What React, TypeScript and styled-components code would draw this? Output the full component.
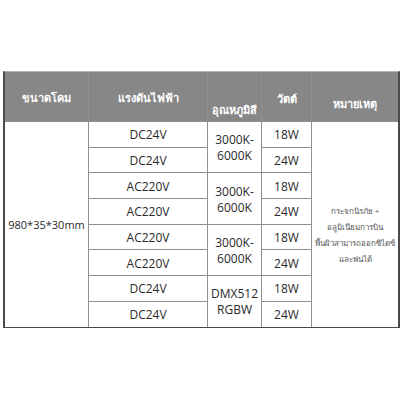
import React from 'react';
import styled, { createGlobalStyle } from 'styled-components';

const GlobalStyle = createGlobalStyle`
  html, body {
    margin: 0;
    padding: 0;
    background: #ffffff;
  }
  body {
    font-family: "Open Sans", "Noto Sans", "DejaVu Sans", sans-serif;
  }
`;

const Page = styled.div`
  width: 400px;
  height: 400px;
  padding: 71px 0 0 3px;
  box-sizing: border-box;
`;

const Table = styled.div`
  display: grid;
  grid-template-columns: 83px 118px 53px 49px 86px;
  grid-template-rows: 49px repeat(8, 24.7px);
  gap: 1px;
  width: fit-content;
  background: #8f8f8f;
  border-top: 1px solid #b5b5b5;
  border-left: 2px solid #4a4a4a;
  border-right: 2px solid #4a4a4a;
  border-bottom: 1px solid #4a4a4a;
`;

const HeadCell = styled.div<{ offset: number }>`
  background: #878787;
  color: #ffffff;
  font-size: 11px;
  font-weight: 700;
  display: flex;
  align-items: center;
  justify-content: center;
  padding-top: ${(p) => p.offset}px;
  box-sizing: border-box;
`;

const Cell = styled.div<{ span?: number; col: number; row: number; size?: number }>`
  grid-column: ${(p) => p.col};
  grid-row: ${(p) => p.row} / span ${(p) => p.span ?? 1};
  background: #ffffff;
  color: #2a2a2a;
  font-size: ${(p) => p.size ?? 12}px;
  line-height: 16px;
  display: flex;
  align-items: center;
  justify-content: center;
  text-align: center;
  padding-top: 2px;
  box-sizing: border-box;
`;

const Note = styled.div`
  font-size: 8px;
  line-height: 16px;
  color: #555555;
  white-space: nowrap;
  padding-top: 20px;
`;

const heads = [
  { text: 'ขนาดโคม', offset: 2 },
  { text: 'แรงดันไฟฟ้า', offset: 2 },
  { text: 'อุณหภูมิสี', offset: 26 },
  { text: 'วัตต์', offset: 4 },
  { text: 'หมายเหตุ', offset: 14 },
];

const voltages = ['DC24V', 'DC24V', 'AC220V', 'AC220V', 'AC220V', 'AC220V', 'DC24V', 'DC24V'];
const temps = [
  ['3000K-', '6000K'],
  ['3000K-', '6000K'],
  ['3000K-', '6000K'],
  ['DMX512', 'RGBW'],
];

const App = () => {
  return (
    <Page>
      <GlobalStyle />
      <Table>
        {heads.map((h) => (
          <HeadCell key={h.text} offset={h.offset}>
            {h.text}
          </HeadCell>
        ))}
        <Cell col={1} row={2} span={8} size={11}>
          980*35*30mm
        </Cell>
        {voltages.map((v, i) => (
          <Cell key={'v' + i} col={2} row={i + 2}>
            {v}
          </Cell>
        ))}
        {temps.map((t, i) => (
          <Cell key={'t' + i} col={3} row={i * 2 + 2} span={2}>
            {t[0]}
            <br />
            {t[1]}
          </Cell>
        ))}
        {voltages.map((_, i) => (
          <Cell key={'w' + i} col={4} row={i + 2}>
            {i % 2 === 0 ? '18W' : '24W'}
          </Cell>
        ))}
        <Cell col={5} row={2} span={8}>
          <Note>
            กระจกนิรภัย +
            <br />
            อลูมิเนียมการบิน
            <br />
            พื้นผิวสามารถออกซิไดซ์
            <br />
            และพ่นได้
          </Note>
        </Cell>
      </Table>
    </Page>
  );
};

export default App;
